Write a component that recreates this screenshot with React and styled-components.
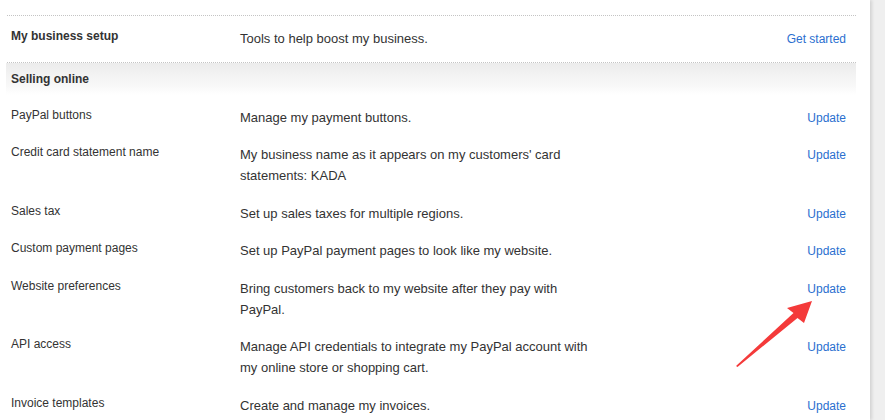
import React from "react";
import styled, { createGlobalStyle } from "styled-components";

const rows = [
  { label: "PayPal buttons", text: "Manage my payment buttons." },
  {
    label: "Credit card statement name",
    text: "My business name as it appears on my customers' card statements: KADA",
  },
  { label: "Sales tax", text: "Set up sales taxes for multiple regions." },
  {
    label: "Custom payment pages",
    text: "Set up PayPal payment pages to look like my website.",
  },
  {
    label: "Website preferences",
    text: "Bring customers back to my website after they pay with PayPal.",
  },
  {
    label: "API access",
    text: "Manage API credentials to integrate my PayPal account with my online store or shopping cart.",
  },
  { label: "Invoice templates", text: "Create and manage my invoices." },
];

const App = () => {
  return (
    <>
      <GlobalStyle />
      <Page>
        <Panel>
          <Divider />
          <Row $bottom={12}>
            <Label $bold>My business setup</Label>
            <Desc>Tools to help boost my business.</Desc>
            <Action href="#">Get started</Action>
          </Row>
          <Divider />
          <SectionHeader>Selling online</SectionHeader>
          {rows.map((row) => (
            <Row key={row.label}>
              <Label>{row.label}</Label>
              <Desc>{row.text}</Desc>
              <Action href="#">Update</Action>
            </Row>
          ))}
        </Panel>
        <Arrow viewBox="0 0 885 420" width="885" height="420">
          <polygon
            points="736,366 793.5,313 787,308 812,301 804,323 797.5,318 737.5,367"
            fill="#f43a3a"
          />
        </Arrow>
      </Page>
    </>
  );
};

const GlobalStyle = createGlobalStyle`
  body {
    margin: 0;
    background-color: #efefef;
    font-family: "Liberation Sans", Arial, sans-serif;
    color: #333;
  }
`;

const Page = styled.div`
  width: 885px;
  height: 420px;
  position: relative;
  overflow: hidden;
`;

const Panel = styled.div`
  width: 870px;
  min-height: 420px;
  box-sizing: border-box;
  padding: 15px 14px 0 6px;
  background-color: #fff;
  box-shadow: 2px 0 3px rgba(0, 0, 0, 0.12);
`;

const Divider = styled.div`
  border-top: 1px dotted #c4c4c4;
  margin-left: 1px;
`;

const Row = styled.div`
  display: grid;
  grid-template-columns: 229px 360px 1fr;
  align-items: start;
  padding: 13px 10px ${(p) => p.$bottom || 4.25}px 5px;
`;

const Label = styled.div`
  font-size: 12px;
  line-height: 15px;
  font-weight: ${(p) => (p.$bold ? "bold" : "normal")};
  color: #333;
`;

const Desc = styled.div`
  font-size: 13px;
  line-height: 20.5px;
  color: #333;
`;

const Action = styled.a`
  justify-self: end;
  font-size: 12px;
  line-height: 20.5px;
  color: #2b6fcf;
  text-decoration: none;
`;

const SectionHeader = styled.div`
  padding: 9px 5px 8px;
  font-size: 12px;
  line-height: 15px;
  font-weight: bold;
  color: #333;
  background: linear-gradient(#ececec, #f8f8f8 70%, #fff);
`;

const Arrow = styled.svg`
  position: absolute;
  left: 0;
  top: 0;
  pointer-events: none;
`;

export default App;
